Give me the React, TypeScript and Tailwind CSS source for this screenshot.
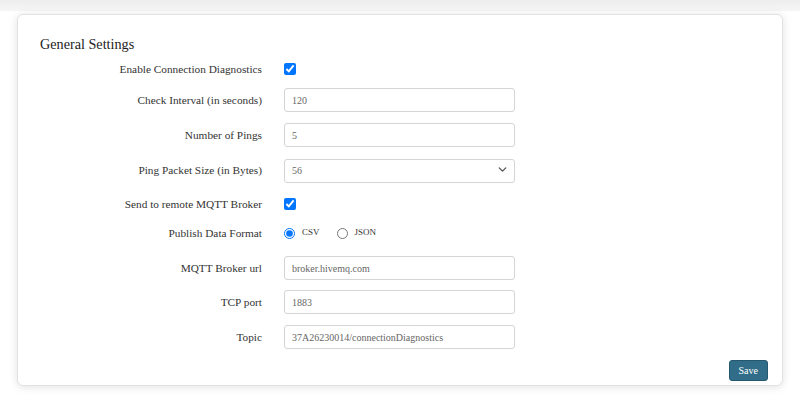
import { ChevronDown } from "lucide-react"

const serif = "font-[family-name:Liberation_Serif,Times_New_Roman,serif]"

const textRows = [
  { label: "Check Interval (in seconds)", value: "120", mt: "mt-[7px]" },
  { label: "Number of Pings", value: "5", mt: "mt-[11px]" },
]

const brokerRows = [
  { label: "MQTT Broker url", value: "broker.hivemq.com", mt: "mt-[11px]" },
  { label: "TCP port", value: "1883", mt: "mt-[10px]" },
  { label: "Topic", value: "37A26230014/connectionDiagnostics", mt: "mt-[11px]" },
]

function Row({ label, mt, children }: { label: string; mt: string; children: React.ReactNode }) {
  return (
    <div className={`flex h-6 items-center ${mt}`}>
      <label className="w-[222px] shrink-0 text-right text-[11.3px] text-[#333]">{label}</label>
      <div className="ml-[22px] flex w-[231px] items-center">{children}</div>
    </div>
  )
}

function TextInput({ value }: { value: string }) {
  return (
    <input
      defaultValue={value}
      className={`h-6 w-full rounded-[3px] border border-[#d4d4d4] bg-white px-[7px] text-[10px] text-[#666] outline-none ${serif}`}
    />
  )
}

export default function App() {
  return (
    <div className={`h-[406px] w-[800px] overflow-hidden bg-white ${serif}`}>
      <div className="h-[11px] bg-gradient-to-b from-[#ededed] to-[#f6f6f6]" />
      <div className="mx-[17px] mt-[3px] h-[372px] rounded-[6px] border border-[#e2e2e2] bg-white shadow-[0_1px_8px_rgba(0,0,0,0.12)]">
        <div className="flex h-full flex-col px-[22px] pt-[19px]">
          <h2 className="text-[14.2px] leading-5 text-[#222]">General Settings</h2>

          <Row label="Enable Connection Diagnostics" mt="mt-[3px]">
            <input type="checkbox" defaultChecked className="h-[12px] w-[12px]" />
          </Row>

          {textRows.map((row) => (
            <Row key={row.label} label={row.label} mt={row.mt}>
              <TextInput value={row.value} />
            </Row>
          ))}

          <Row label="Ping Packet Size (in Bytes)" mt="mt-[11px]">
            <div className="relative w-full">
              <select
                defaultValue="56"
                className={`h-6 w-full appearance-none rounded-[3px] border border-[#d4d4d4] bg-white px-[7px] text-[10px] text-[#666] outline-none ${serif}`}
              >
                <option value="56">56</option>
                <option value="64">64</option>
                <option value="128">128</option>
              </select>
              <ChevronDown
                className="pointer-events-none absolute right-[6px] top-[6px] h-[13px] w-[13px] text-[#555]"
                strokeWidth={2.5}
              />
            </div>
          </Row>

          <Row label="Send to remote MQTT Broker" mt="mt-[10px]">
            <input type="checkbox" defaultChecked className="h-[12px] w-[12px]" />
          </Row>

          <Row label="Publish Data Format" mt="mt-[5px]">
            <label className="flex items-center text-[9px] text-[#333]">
              <input type="radio" name="fmt" defaultChecked className="m-0 h-[11px] w-[11px]" />
              <span className="ml-[7px]">CSV</span>
            </label>
            <label className="ml-[17px] flex items-center text-[9px] text-[#333]">
              <input type="radio" name="fmt" className="m-0 h-[11px] w-[11px]" />
              <span className="ml-[7px]">JSON</span>
            </label>
          </Row>

          {brokerRows.map((row) => (
            <Row key={row.label} label={row.label} mt={row.mt}>
              <TextInput value={row.value} />
            </Row>
          ))}

          <div className="mt-auto mb-[4px] flex justify-end">
            <button className={`-mr-[8px] h-[21px] rounded-[3px] border border-[#23586f] bg-[#316d88] px-[9px] text-[10px] text-white ${serif}`}>
              Save
            </button>
          </div>
        </div>
      </div>
    </div>
  )
}
